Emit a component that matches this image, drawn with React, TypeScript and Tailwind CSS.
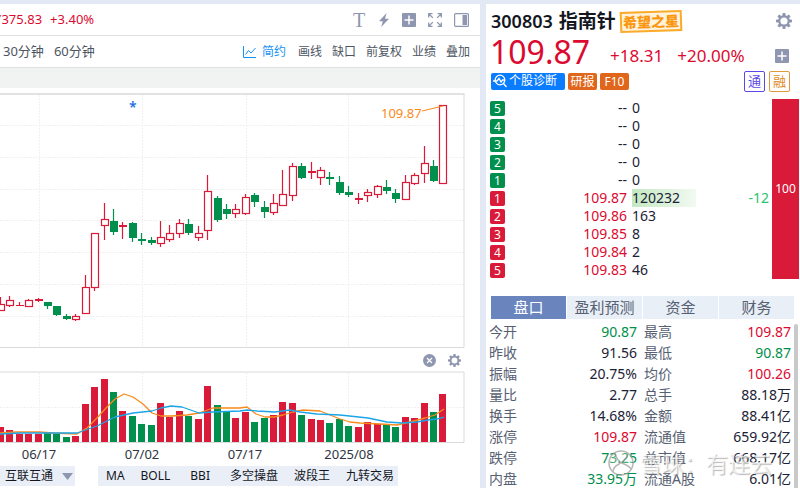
import clsx from "clsx";

const RED = "#d91a38";
const GREEN = "#008f4c";

type Candle = {
  high: number;
  top: number;
  bottom: number;
  low: number;
  up: boolean;
  volume: number;
};

const candle = (
  high: number,
  top: number,
  bottom: number,
  low: number,
  up: number,
  volume: number,
): Candle => ({ high, top, bottom, low, up: up === 1, volume });

// high, body top, body bottom, low, rising, top of the volume bar
const candles: Candle[] = [
  candle(297, 304, 311, 311, 1, 427),
  candle(296, 300, 306, 307, 1, 430),
  candle(302, 305, 306, 306, 1, 434),
  candle(299, 300, 307, 307, 1, 434),
  candle(298, 299, 301, 302, 1, 434),
  candle(302, 302, 306, 309, 0, 433),
  candle(306, 306, 315, 316, 0, 434),
  candle(314, 316, 319, 320, 0, 437),
  candle(314, 316, 320, 321, 1, 436),
  candle(275, 287, 314, 314, 1, 404),
  candle(233, 233, 288, 291, 1, 387),
  candle(203, 219, 226, 240, 1, 379),
  candle(209, 221, 232, 235, 0, 392),
  candle(222, 225, 227, 239, 1, 411),
  candle(222, 223, 238, 242, 0, 416),
  candle(233, 239, 241, 245, 0, 424),
  candle(237, 240, 243, 245, 0, 425),
  candle(221, 237, 244, 247, 1, 403),
  candle(225, 233, 240, 242, 1, 417),
  candle(219, 223, 234, 238, 1, 411),
  candle(219, 224, 233, 235, 0, 416),
  candle(226, 233, 238, 241, 1, 419),
  candle(175, 191, 231, 240, 1, 386),
  candle(196, 198, 220, 222, 0, 405),
  candle(204, 209, 214, 219, 0, 412),
  candle(204, 209, 214, 218, 1, 418),
  candle(194, 197, 214, 215, 1, 412),
  candle(193, 195, 202, 207, 0, 422),
  candle(201, 207, 212, 218, 0, 418),
  candle(194, 203, 213, 215, 1, 415),
  candle(170, 194, 206, 206, 1, 402),
  candle(163, 166, 196, 201, 1, 403),
  candle(163, 166, 178, 179, 0, 415),
  candle(162, 171, 173, 179, 1, 419),
  candle(167, 170, 178, 185, 1, 420),
  candle(172, 177, 179, 185, 0, 423),
  candle(176, 182, 193, 195, 0, 419),
  candle(186, 192, 195, 197, 0, 426),
  candle(193, 198, 200, 204, 1, 427),
  candle(189, 192, 196, 202, 1, 422),
  candle(185, 186, 195, 198, 1, 424),
  candle(180, 187, 191, 194, 0, 424),
  candle(189, 193, 199, 203, 0, 427),
  candle(175, 182, 200, 200, 1, 417),
  candle(173, 175, 184, 185, 1, 418),
  candle(146, 163, 174, 183, 1, 403),
  candle(160, 166, 181, 182, 0, 412),
  candle(105, 105, 184, 184, 1, 394),
];

const candleX = (i: number) => Math.round(1 + i * 9.414);

const gridX = [39.5, 142.5, 246.5, 348.5];
const gridY = [125.5, 157.5, 189.5, 220.5, 252.5, 284.5, 316.5];

const dates = [
  { x: 39, label: "06/17" },
  { x: 142, label: "07/02" },
  { x: 245, label: "07/17" },
  { x: 349, label: "2025/08" },
];

const asks = [5, 4, 3, 2, 1];
const bids = [
  { level: 1, price: "109.87", qty: "120232", diff: "-12" },
  { level: 2, price: "109.86", qty: "163" },
  { level: 3, price: "109.85", qty: "8" },
  { level: 4, price: "109.84", qty: "2" },
  { level: 5, price: "109.83", qty: "46" },
];

const tabs = ["盘口", "盈利预测", "资金", "财务"];
const tools = ["画线", "缺口", "前复权", "业绩", "叠加"];

type Tone = "up" | "down" | "flat";
type Quote = [string, string, Tone, string, string, Tone];

const quotes: Quote[] = [
  ["今开", "90.87", "down", "最高", "109.87", "up"],
  ["昨收", "91.56", "flat", "最低", "90.87", "down"],
  ["振幅", "20.75%", "flat", "均价", "100.26", "up"],
  ["量比", "2.77", "flat", "总手", "88.18万", "flat"],
  ["换手", "14.68%", "flat", "金额", "88.41亿", "flat"],
  ["涨停", "109.87", "up", "流通值", "659.92亿", "flat"],
  ["跌停", "73.25", "down", "总市值", "668.17亿", "flat"],
  ["内盘", "33.95万", "down", "流通A股", "6.01亿", "flat"],
];

const toneClass: Record<Tone, string> = {
  up: "text-[#dc0a30]",
  down: "text-[#008f4c]",
  flat: "text-[#1b2236]",
};

const Gear = ({ className }: { className?: string }) => (
  <svg viewBox="0 0 16 16" className={className} fill="#8f96af">
    {[0, 45, 90, 135, 180, 225, 270, 315].map((deg) => (
      <path key={deg} d="M6.2 3.6 6.7 0h2.6l.5 3.6z" transform={`rotate(${deg} 8 8)`} />
    ))}
    <circle cx="8" cy="8" r="4.7" fill="none" stroke="#8f96af" strokeWidth="2.2" />
  </svg>
);

const PlusBox = () => (
  <svg viewBox="0 0 14 14" className="block size-[14px]">
    <rect width="14" height="14" rx="1" fill="#8f96af" />
    <path d="M7 2.5v9M2.5 7h9" stroke="#fff" strokeWidth="1.5" />
  </svg>
);

const PriceChart = () => (
  <svg viewBox="0 93 465 256" className="block w-full">
    <g stroke="#f1f1f1" strokeDasharray="2 1">
      {gridX.map((x) => (
        <line key={x} x1={x} x2={x} y1="95" y2="347" />
      ))}
      {gridY.map((y) => (
        <line key={y} x1="0" x2="464" y1={y} y2={y} />
      ))}
    </g>
    <path d="M0 94H464.5" stroke="#e2e2e2" strokeWidth="2" />
    <path d="M464 94V347.5H0" fill="none" stroke="#dadada" />
    {candles.map((c, i) => {
      const x = candleX(i);
      const color = c.up ? RED : GREEN;
      const height = c.bottom - c.top;
      return (
        <g key={i} stroke={color} strokeWidth="1.2">
          <line x1={x - 0.5} x2={x - 0.5} y1={c.high} y2={c.low} />
          {c.up && height > 2 ? (
            <rect x={x - 3.5} y={c.top + 0.5} width="7" height={height - 1} fill="#fff" />
          ) : (
            <rect x={x - 4} y={c.top} width="8" height={height} fill={color} stroke="none" />
          )}
        </g>
      );
    })}
    <path d="M422 111 443 106" stroke="#f98a1c" />
    <text x="381" y="118" fontSize="13" fill="#f98a1c">
      109.87
    </text>
    <text x="129" y="112" fontSize="14" fontWeight="600" fill="#1c6fe0">
      *
    </text>
  </svg>
);

const VolumeChart = () => (
  <svg viewBox="0 371 465 95" className="block w-full">
    <g stroke="#f1f1f1" strokeDasharray="2 1">
      {gridX.map((x) => (
        <line key={x} x1={x} x2={x} y1="373" y2="442" />
      ))}
      <line x1="0" x2="464" y1="407.5" y2="407.5" />
    </g>
    <path d="M0 372H464V442.5H0" fill="none" stroke="#dadada" />
    {candles.map((c, i) => (
      <rect
        key={i}
        x={candleX(i) - 4}
        y={c.volume}
        width="7"
        height={442 - c.volume}
        fill={c.up ? RED : GREEN}
      />
    ))}
    <polyline
      points="0,433 16,432 40,432 53,433 77,434 87,428 97,418 106,408 115,399 124,394 133,397 143,404 152,413 161,416 172,416 187,415 199,413 213,408 222,408 240,408 247,407 256,414 265,417 274,417 283,415 293,412 303,410 320,411 330,415 340,419 350,422 360,423 380,424 397,425 410,422 425,418 435,415 444,409"
      fill="none"
      stroke="#f98a1c"
      strokeWidth="1.3"
      strokeLinejoin="round"
    />
    <polyline
      points="0,434 20,433 40,433 77,433 97,426 115,417 133,413 152,411 161,408 171,406 182,407 199,413 213,412 240,411 247,410 257,411 275,412 290,410 300,412 317,414 340,415 368,418 387,422 402,423 417,422 428,420 437,419 444,417"
      fill="none"
      stroke="#1ba5e8"
      strokeWidth="1.3"
      strokeLinejoin="round"
    />
    <g fontSize="13" fill="#2f3542" textAnchor="middle">
      {dates.map((d) => (
        <text key={d.label} x={d.x} y="459">
          {d.label}
        </text>
      ))}
    </g>
  </svg>
);

const ChartPanel = () => (
  <section className="min-w-0 flex-1 overflow-hidden bg-white">
    <div className="flex h-8 items-center justify-between border-b border-[#dfdfdf] pr-[11px]">
      <div className="-ml-1.5 flex gap-2 text-[13px] text-[#dc0a30]">
        <span>7375.83</span>
        <span>+3.40%</span>
      </div>
      <div className="flex items-center gap-3 text-[#8f96af]">
        <button
          aria-label="文字"
          className="w-[14px] font-['Liberation_Serif',serif] text-[20px] leading-5"
        >
          T
        </button>
        <button aria-label="闪电">
          <svg viewBox="0 0 12 14" className="block h-[14px] w-3" fill="currentColor">
            <path d="M8.6 0 1 8.2h3.8L3.2 14 11 5.7H7z" />
          </svg>
        </button>
        <button aria-label="添加">
          <PlusBox />
        </button>
        <button aria-label="全屏">
          <svg
            viewBox="0 0 14 14"
            className="block size-[14px]"
            fill="none"
            stroke="currentColor"
            strokeWidth="1.3"
          >
            <path d="M.7 4.5V.7h3.8M.7.7l4.2 4.2M9.5.7h3.8v3.8M13.3.7 9.1 4.9M.7 9.5v3.8h3.8M.7 13.3l4.2-4.2M13.3 9.5v3.8H9.5M13.3 13.3 9.1 9.1" />
          </svg>
        </button>
        <button aria-label="侧栏">
          <svg viewBox="0 0 15 14" className="block h-[14px] w-[15px]">
            <rect
              x=".6"
              y=".6"
              width="13.8"
              height="12.8"
              rx="1"
              fill="none"
              stroke="currentColor"
              strokeWidth="1.2"
            />
            <rect x="8.5" y="2" width="4.5" height="10" fill="currentColor" />
          </svg>
        </button>
      </div>
    </div>
    <div className="flex h-8 items-center justify-between border-b border-[#dfdfdf] pr-[10px] pl-[3px] text-[#4d5562]">
      <div className="flex gap-[10px] text-[13px]">
        <button>30分钟</button>
        <button>60分钟</button>
      </div>
      <div className="flex gap-[10px] text-xs">
        <button className="mr-0.5 flex items-center gap-1.5 text-[#1491f5]">
          <svg viewBox="0 0 13 12" className="h-3 w-[13px]" fill="none" stroke="currentColor">
            <path d="M.5 0v11.5H13M2.5 8.5l3-4 2.5 2.5L12.5 2" />
          </svg>
          简约
        </button>
        {tools.map((tool) => (
          <button key={tool}>{tool}</button>
        ))}
      </div>
    </div>
    <div className="mb-[5px] h-5 bg-[#f1f3f2]" />
    <div className="pr-[15px]">
      <PriceChart />
      <div className="flex h-[22px] items-center justify-end gap-3 pr-1">
        <button aria-label="关闭">
          <svg viewBox="0 0 13 13" className="block size-[13px]">
            <circle cx="6.5" cy="6.5" r="6.5" fill="#8f96af" />
            <path d="m4 4 5 5M9 4 4 9" stroke="#fff" strokeWidth="1.3" />
          </svg>
        </button>
        <button aria-label="设置">
          <Gear className="block size-[13px]" />
        </button>
      </div>
      <VolumeChart />
    </div>
    <div className="flex h-5 gap-[23px] text-xs text-[#14171f]">
      <div className="relative bg-[#eaeff7]">
        <select
          aria-label="指标分组"
          className="block h-5 w-[75px] appearance-none bg-transparent pl-[5px] leading-5"
        >
          <option>互联互通</option>
        </select>
        <svg
          viewBox="0 0 11 7"
          className="pointer-events-none absolute top-[7px] right-[2px] h-[7px] w-[11px]"
          fill="#8f96af"
        >
          <path d="M0 0h11L5.5 7z" />
        </svg>
      </div>
      <div className="flex items-center gap-4 bg-[#eaeff7] pr-1 pl-2">
        <button>MA</button>
        <button>BOLL</button>
        <button className="px-1">BBI</button>
        <button>多空操盘</button>
        <button>波段王</button>
        <button>九转交易</button>
      </div>
    </div>
  </section>
);

const Level = ({ value, className }: { value: number; className: string }) => (
  <td className="w-[15px] p-0">
    <span
      className={clsx(
        "block h-[15px] w-[15px] rounded-xs text-center text-xs leading-[15px] text-white",
        className,
      )}
    >
      {value}
    </span>
  </td>
);

const OrderBook = () => (
  <div className="flex pr-px pl-1">
    <table className="flex-1 border-collapse text-[14px] leading-[18px]">
      <tbody>
        {asks.map((level) => (
          <tr key={level} className="h-[18px] text-[#1b2236]">
            <Level value={level} className="bg-[#008f4c]" />
            <td className="w-[122px] p-0 text-right">--</td>
            <td className="p-0 pl-[5px]">0</td>
            <td className="p-0" />
          </tr>
        ))}
        {bids.map((bid) => (
          <tr key={bid.level} className="h-[18px]">
            <Level value={bid.level} className="bg-[#d91a38]" />
            <td className="w-[122px] p-0 text-right text-[#dc0a30]">{bid.price}</td>
            <td className="p-0 pl-[5px] text-[#1b2236]">
              <span
                className={clsx(
                  "block w-16",
                  bid.diff && "bg-linear-to-r from-[#c4e8c2] to-[#f2faf1]",
                )}
              >
                {bid.qty}
              </span>
            </td>
            <td className="p-0 pr-[3px] text-right text-[#2bc46a]">{bid.diff}</td>
          </tr>
        ))}
      </tbody>
    </table>
    <div className="flex w-[27px] items-center justify-center bg-[#d91a38] text-xs text-white">
      100
    </div>
  </div>
);

const QuoteTable = () => (
  <div className="relative mt-[2px] pr-[9px] pl-[3px]">
    <table className="w-full table-fixed border-collapse text-[14px] leading-[21px]">
      <tbody>
        {quotes.map(([label, value, tone, label2, value2, tone2]) => (
          <tr key={label}>
            <th className="w-2/12 p-0 text-left font-normal text-[#566072]">{label}</th>
            <td className={clsx("w-4/12 p-0 pr-[3px] text-right", toneClass[tone])}>{value}</td>
            <th className="w-3/12 p-0 pl-1 text-left font-normal text-[#566072]">{label2}</th>
            <td className={clsx("w-3/12 p-0 text-right", toneClass[tone2])}>{value2}</td>
          </tr>
        ))}
      </tbody>
    </table>
    <div className="absolute top-[3px] right-[2px] bottom-0 w-1 rounded-full bg-[#c9c9c9]" />
    <div className="pointer-events-none absolute top-[128px] left-[122px] flex items-center gap-1.5 text-[22px] leading-7 whitespace-nowrap text-white/70 [text-shadow:1px_1px_1px_#8889]">
      <svg viewBox="0 0 26 26" className="size-[26px]" fill="none" stroke="#9a9a9a" opacity=".7">
        <circle cx="13" cy="13" r="12" strokeWidth="1.5" fill="#fff" fillOpacity=".4" />
        <path d="M7 3c1 6 4 9 9 11s7 4 7 6M20 4c-2 5-5 8-9 10s-6 5-6 8" strokeWidth="1.5" />
      </svg>
      <span>雪球：有连云</span>
    </div>
  </div>
);

const QuotePanel = () => (
  <aside className="w-[314px] shrink-0 bg-white">
    <div className="flex h-[34px] items-center pr-2 pl-[5px] text-[#14171f]">
      <h1 className="flex items-center gap-1.5 font-semibold">
        <span className="text-[18px]">300803</span>
        <span className="text-[19px]">指南针</span>
      </h1>
      <span className="ml-1 -rotate-2 border-2 border-[#fbab2c] bg-[#fff3dc] px-px text-[14px] leading-[17px] font-black text-[#fa960f]">
        希望之星
      </span>
      <button aria-label="设置" className="ml-auto">
        <Gear className="block size-4" />
      </button>
    </div>
    <div className="flex h-7 items-center pr-[11px] pl-1 text-[#dc0a30]">
      <span className="text-[32px] leading-7">109.87</span>
      <span className="ml-5 pt-2 text-[17px]">+18.31</span>
      <span className="ml-3.5 pt-2 text-[17px]">+20.00%</span>
      <button aria-label="加自选" className="ml-auto pt-2">
        <PlusBox />
      </button>
    </div>
    <div className="mt-1 mb-[7px] flex h-[22px] items-center gap-[3px] pr-[10px] pl-[5px] text-xs text-white">
      <a
        href="#diagnosis"
        className="flex h-[17px] w-[74px] items-center gap-0.5 rounded-xs bg-[#0a7cff] pl-0.5"
      >
        <svg
          viewBox="0 0 14 14"
          className="size-[14px]"
          fill="none"
          stroke="#fff"
          strokeWidth="1.3"
        >
          <circle cx="7" cy="6" r="4.8" />
          <path d="M0 7h4l2-2.5L8 8l1.5-2H12M10.5 9.5l3 3.5" />
        </svg>
        个股诊断
      </a>
      <a
        href="#report"
        className="h-[17px] w-[29px] rounded-xs bg-[#e0661c] text-center leading-[17px]"
      >
        研报
      </a>
      <a
        href="#f10"
        className="h-[17px] w-[29px] rounded-xs bg-[#e0661c] text-center leading-[17px]"
      >
        F10
      </a>
      <span className="ml-auto size-[21px] rounded-xs border border-[#5a48e8] text-center text-[13px] leading-[19px] text-[#5a48e8]">
        通
      </span>
      <span className="ml-px size-[21px] rounded-xs border border-[#e09a3a] text-center text-[13px] leading-[19px] text-[#e08a1c]">
        融
      </span>
    </div>
    <OrderBook />
    <nav className="mt-[17px] flex gap-px pr-1.5 pl-[5px]">
      {tabs.map((tab, i) => (
        <button
          key={tab}
          className={clsx(
            "h-[23px] flex-1 text-[15px] leading-[23px]",
            i === 0 ? "bg-[#6a85bd] text-white" : "bg-[#e9eff7] text-[#566072]",
          )}
        >
          {tab}
        </button>
      ))}
    </nav>
    <QuoteTable />
  </aside>
);

export default function App() {
  return (
    <main className="flex h-screen gap-1.5 overflow-hidden bg-[#e2e9f5] pt-1 font-['Noto_Sans','Noto_Sans_CJK_SC',sans-serif]">
      <ChartPanel />
      <QuotePanel />
    </main>
  );
}
